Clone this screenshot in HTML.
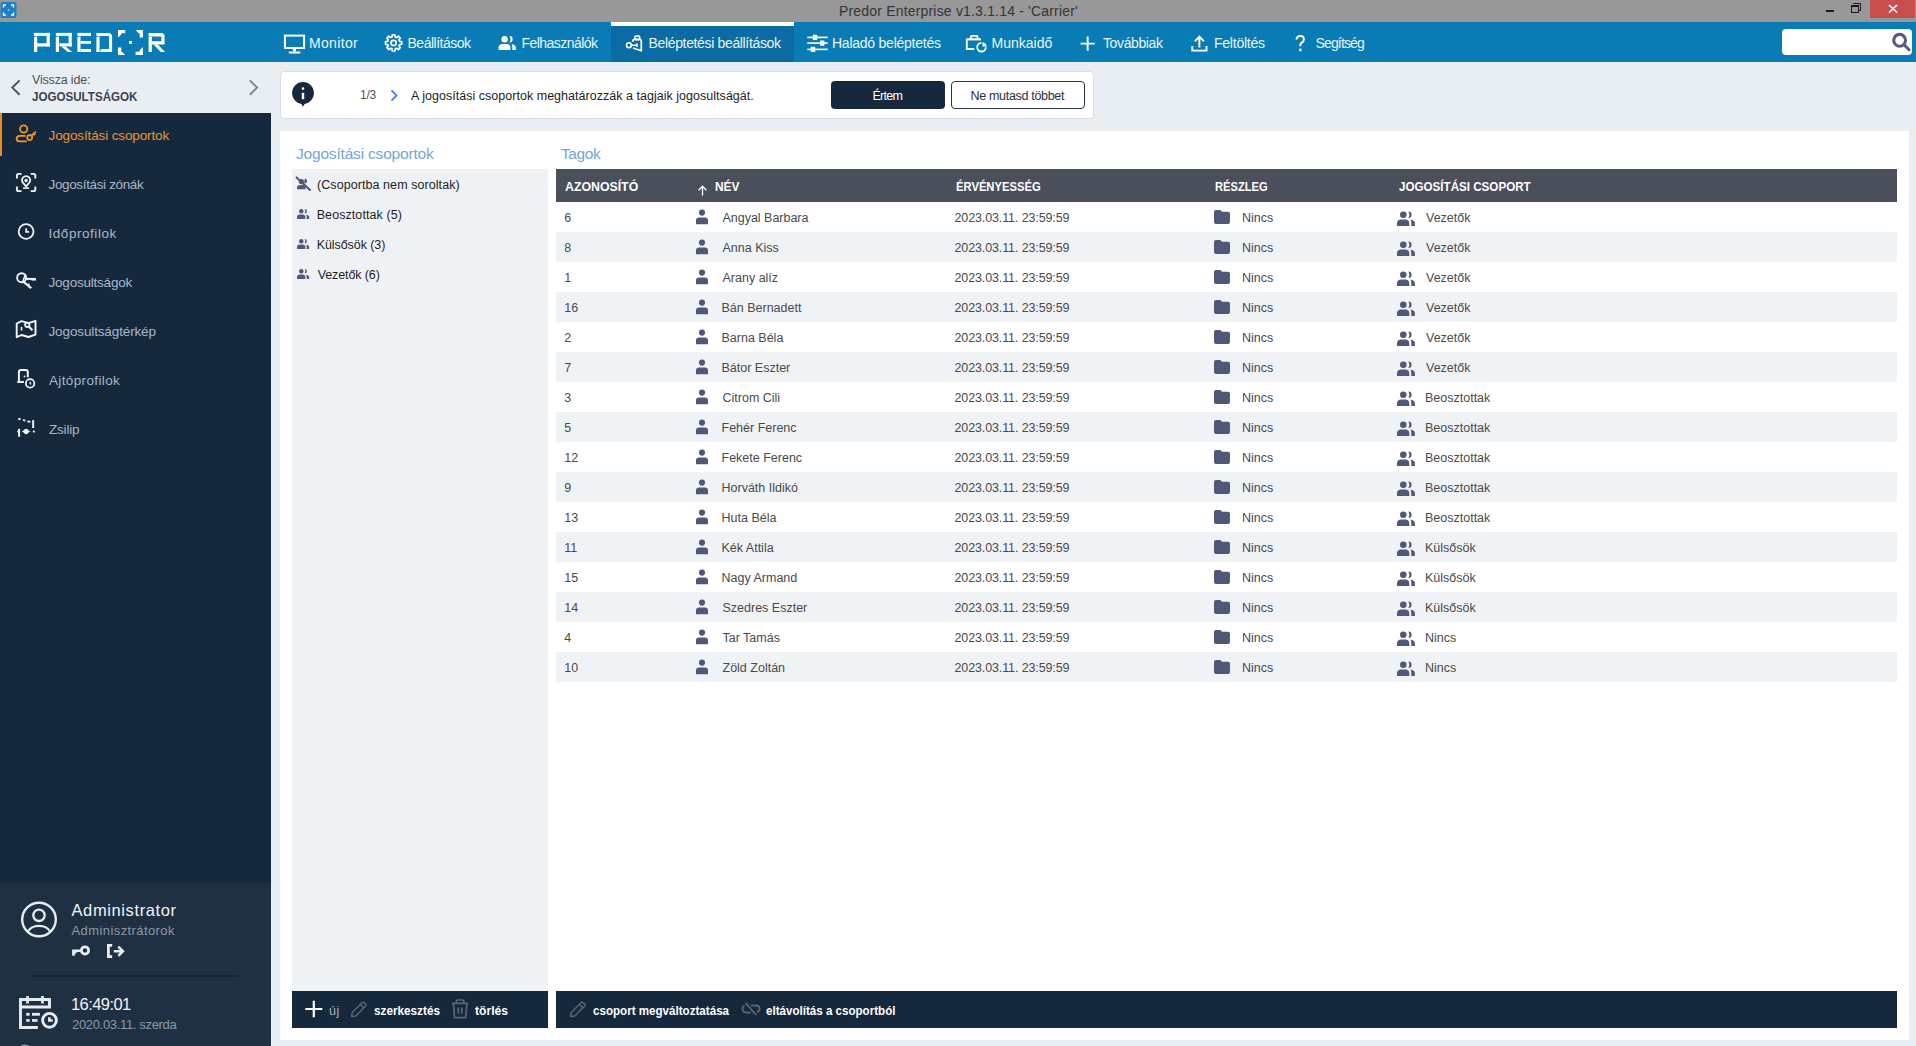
<!DOCTYPE html>
<html><head><meta charset="utf-8"><style>
html,body{margin:0;padding:0;width:1916px;height:1046px;overflow:hidden;background:#e8eef2;font-family:'Liberation Sans', sans-serif;}
div,svg{box-sizing:border-box}
</style></head><body>
<div style="position:absolute;left:0px;top:0px;width:1916px;height:22px;background:#989898;"></div><div style="position:absolute;left:0px;top:22px;width:1916px;height:40px;background:#0a7cb5;"></div><div style="position:absolute;left:0px;top:62px;width:1916px;height:984px;background:#e8eef2;"></div><div style="position:absolute;left:0px;top:113px;width:271px;height:933px;background:#16283b;"></div><div style="position:absolute;left:0px;top:883px;width:271px;height:163px;background:#1f3043;"></div><div style="position:absolute;left:0px;top:113px;width:2px;height:43px;background:#ea8c20;"></div><div style="position:absolute;left:611px;top:22px;width:183px;height:40px;background:#0a6ca2;"></div><div style="position:absolute;left:611px;top:22px;width:183px;height:4px;background:#ffffff;"></div><div style="position:absolute;left:1782px;top:29px;width:130px;height:26px;background:#ffffff;border-radius:4px"></div><div style="position:absolute;left:280px;top:71px;width:814px;height:48px;background:#ffffff;border:1px solid #d8dee3;border-radius:4px;box-sizing:border-box"></div><div style="position:absolute;left:831px;top:81px;width:114px;height:28px;background:#16283b;border-radius:4px"></div><div style="position:absolute;left:951px;top:81px;width:134px;height:28px;background:#ffffff;border:1px solid #2b3442;border-radius:4px;box-sizing:border-box"></div><div style="position:absolute;left:280px;top:131px;width:1629px;height:909px;background:#ffffff;"></div><div style="position:absolute;left:292px;top:169px;width:256px;height:822px;background:#eef2f5;"></div><div style="position:absolute;left:556px;top:169px;width:1341px;height:33px;background:#4b4f5c;"></div><div style="position:absolute;left:556px;top:232px;width:1341px;height:30px;background:#f0f3f6;"></div><div style="position:absolute;left:556px;top:292px;width:1341px;height:30px;background:#f0f3f6;"></div><div style="position:absolute;left:556px;top:352px;width:1341px;height:30px;background:#f0f3f6;"></div><div style="position:absolute;left:556px;top:412px;width:1341px;height:30px;background:#f0f3f6;"></div><div style="position:absolute;left:556px;top:472px;width:1341px;height:30px;background:#f0f3f6;"></div><div style="position:absolute;left:556px;top:532px;width:1341px;height:30px;background:#f0f3f6;"></div><div style="position:absolute;left:556px;top:592px;width:1341px;height:30px;background:#f0f3f6;"></div><div style="position:absolute;left:556px;top:652px;width:1341px;height:30px;background:#f0f3f6;"></div><div style="position:absolute;left:292px;top:991px;width:256px;height:37px;background:#16283b;"></div><div style="position:absolute;left:556px;top:991px;width:1341px;height:37px;background:#16283b;"></div><div style="position:absolute;left:30px;top:975px;width:209px;height:2px;background:#17232f;"></div>
<svg style="position:absolute;left:0;top:0" width="1916" height="1046" viewBox="0 0 1916 1046"><rect x="0.5" y="2" width="16" height="16" rx="2" fill="#1b80c4"/><path d="M3.5 7.5V5h2.5 M11 5h2.5v2.5 M13.5 12.5V15H11 M6 15H3.5v-2.5" stroke="#fff" stroke-width="1.4" fill="none"/><rect x="7.7" y="9.2" width="1.6" height="1.6" fill="#9fd0f0"/><rect x="1826" y="10" width="8" height="2" fill="#1a1a1a"/><path d="M1853.5 4V3.5h7v7h-1.5" stroke="#1a1a1a" stroke-width="1" fill="none"/><rect x="1851.5" y="5.5" width="7" height="7" stroke="#1a1a1a" stroke-width="1" fill="none"/><rect x="1851" y="5" width="8" height="2" fill="#1a1a1a"/><rect x="1870" y="0" width="45" height="18" fill="#c94f4f"/><path d="M1889 5L1897 12.5M1897 5L1889 12.5" stroke="#fff" stroke-width="1.6"/><rect x="34" y="32.9" width="15.7" height="3.0" fill="#fff"/><rect x="46.6" y="32.9" width="3.1" height="13.5" fill="#fff"/><path d="M37.2 43.3 L49.7 43.3 L49.7 46.4 L38.2 46.4 L37.2 47.4Z" fill="#fff"/><path d="M34 37.6 L35.2 36.4 L37.2 36.4 L37.2 52 L34 52Z" fill="#fff"/><rect x="55.8" y="32.9" width="15.9" height="3.0" fill="#fff"/><rect x="68.6" y="32.9" width="3.1" height="13.5" fill="#fff"/><rect x="59.4" y="43.3" width="12.3" height="3.1" fill="#fff"/><path d="M55.8 37.6 L57 36.4 L59 36.4 L59 52 L55.8 52Z" fill="#fff"/><path d="M61.2 46.4 L65.4 46.4 L72.2 52 L67.9 52Z" fill="#fff"/><rect x="77.4" y="32.9" width="13.6" height="3.0" fill="#fff"/><path d="M77.4 37.6 L78.6 36.4 L80.5 36.4 L80.5 52 L77.4 52Z" fill="#fff"/><path d="M81.2 41 L91 41 L91 43.7 L80.5 43.7 L80.5 41.7Z" fill="#fff"/><rect x="80.5" y="49" width="10.5" height="3.0" fill="#fff"/><path d="M96.4 32.9 L109.8 32.9 L112.1 35.2 L112.1 52 L100.3 52 L100.3 50.2 L101.5 49 L109 49 L109 36.6 L108.3 35.9 L96.4 35.9Z" fill="#fff"/><path d="M96.4 37.6 L97.6 36.4 L99.6 36.4 L99.6 52 L96.4 52Z" fill="#fff"/><path d="M118 30.1 L125.2 30.1 L125.2 33.3 L121.2 33.3 L121.2 34.4 L118 37.6Z" fill="#fff"/><path d="M135.6 30.1 L142.9 30.1 L142.9 37.6 L139.7 37.6 L139.7 33.3 L138.8 33.3Z" fill="#fff"/><path d="M118 47.6 L121.2 47.6 L121.2 51.7 L122 51.7 L125.2 54.9 L118 54.9Z" fill="#fff"/><path d="M142.9 47.1 L142.9 54.9 L135.6 54.9 L135.6 51.7 L139.7 51.7 L139.7 50.3Z" fill="#fff"/><rect x="129" y="41" width="3.1" height="2.8" fill="#fff"/><path d="M148.6 33 L162.6 33 L164.6 35 L164.6 44.4 L151.9 44.4 L151.9 41.3 L161.4 41.3 L161.4 36.4 L148.6 36.4Z" fill="#fff"/><path d="M148.6 37.4 L149.6 36.4 L151.9 36.4 L151.9 52 L148.6 52Z" fill="#fff"/><path d="M153.6 44.4 L157.8 44.4 L165 52 L160.8 52Z" fill="#fff"/><rect x="284.9" y="35.6" width="19.2" height="12.4" stroke="#fff" stroke-width="2" fill="none"/><rect x="293" y="48" width="3" height="3.5" fill="#fff"/><rect x="288.7" y="51.5" width="11.7" height="2" rx="0.8" fill="#fff"/><path d="M399.59 41.31 L401.68 41.51 L401.68 44.29 L399.59 44.49 L398.96 46.01 L400.30 47.63 L398.33 49.60 L396.71 48.26 L395.19 48.89 L394.99 50.98 L392.21 50.98 L392.01 48.89 L390.49 48.26 L388.87 49.60 L386.90 47.63 L388.24 46.01 L387.61 44.49 L385.52 44.29 L385.52 41.51 L387.61 41.31 L388.24 39.79 L386.90 38.17 L388.87 36.20 L390.49 37.54 L392.01 36.91 L392.21 34.82 L394.99 34.82 L395.19 36.91 L396.71 37.54 L398.33 36.20 L400.30 38.17 L398.96 39.79Z" stroke="#fff" stroke-width="1.7" fill="none" stroke-linejoin="round"/><circle cx="393.6" cy="42.9" r="2.6" stroke="#fff" stroke-width="1.7" fill="none"/><g transform="translate(498.6,36.1) scale(0.96)" fill="#fff"><circle cx="6.3" cy="3.3" r="3.3"/><path d="M11.3 0A3.3 3.3 0 0 1 11.3 6.6A6 6 0 0 0 11.3 0Z"/><path d="M0 14.6V11.5C0 9.6 1.8 8.2 4 8.2H8.3C10.5 8.2 12.3 9.6 12.3 11.5V14.6Z"/><path d="M13.4 8.4C16 8.6 17.9 9.8 17.9 11.6V14.6H14.3V11.8C14.3 10.5 14.2 9.4 13.4 8.4Z"/></g><path d="M632.6 41.8C632.6 40 633.6 39.4 635 39.4H640.6L641.3 41.3V50.8L633 48" stroke="#fff" stroke-width="1.7" fill="none" stroke-linejoin="round"/><rect x="635" y="36" width="4.6" height="3.6" rx="0.8" stroke="#fff" stroke-width="1.6" fill="none"/><circle cx="628.9" cy="45.2" r="2.4" stroke="#fff" stroke-width="1.6" fill="none"/><path d="M631.3 45.2H637M637 43.4V47" stroke="#fff" stroke-width="1.6" fill="none"/><rect x="807.3" y="36.6" width="20.4" height="1.6" fill="#fff"/><rect x="812.8" y="34.8" width="4.4" height="5.2" rx="0.6" fill="#fff"/><rect x="807.3" y="42.300000000000004" width="20.4" height="1.6" fill="#fff"/><rect x="820.0" y="40.5" width="4.4" height="5.2" rx="0.6" fill="#fff"/><rect x="807.3" y="48.6" width="20.4" height="1.6" fill="#fff"/><rect x="810.8" y="46.8" width="4.4" height="5.2" rx="0.6" fill="#fff"/><path d="M980.8 39.3V39.3H966.8V49H974.2" stroke="#fff" stroke-width="1.8" fill="none" stroke-linejoin="round"/><path d="M966.8 39.3H980.8" stroke="#fff" stroke-width="1.8"/><path d="M970.8 39.3V36.6Q970.8 35.8 971.6 35.8H976.8Q977.6 35.8 977.6 36.6V39.3" stroke="#fff" stroke-width="1.7" fill="none"/><path d="M981.5 42.9A4.3 4.3 0 1 0 985.8 47.2" stroke="#fff" stroke-width="1.8" fill="none"/><path d="M982.5 42.3A4.6 4.6 0 0 1 986.6 46.4H982.5Z" fill="#fff"/><path d="M1080.6 43.6H1094.7M1087.65 36.6V50.7" stroke="#fff" stroke-width="1.9"/><path d="M1192.3 46V50.6H1206.5V46" stroke="#fff" stroke-width="1.9" fill="none"/><path d="M1199.4 47.5V37M1194.8 41.3L1199.4 36.6L1204 41.3" stroke="#fff" stroke-width="1.9" fill="none"/><path d="M1296.6 39.6C1296.6 37.4 1298 36 1300.2 36C1302.5 36 1303.9 37.4 1303.9 39.4C1303.9 41.4 1302.6 42.1 1301.4 42.9C1300.6 43.5 1300.3 44.1 1300.3 45.4V46.2" stroke="#fff" stroke-width="2" fill="none"/><rect x="1299.1" y="48.6" width="2.4" height="2.6" rx="0.4" fill="#fff"/><circle cx="1899.6" cy="40.3" r="5.9" stroke="#535c7b" stroke-width="3.1" fill="none"/><path d="M1904.2 44.9L1909 49.7" stroke="#535c7b" stroke-width="3" stroke-linecap="round"/><path d="M19.6 80.4L12.3 87.6L19.6 94.8" stroke="#4a505c" stroke-width="1.9" fill="none"/><path d="M249.8 80.4L257.1 87.6L249.8 94.8" stroke="#7d838c" stroke-width="1.9" fill="none"/><circle cx="23.7" cy="129" r="3.6" stroke="#e9982b" stroke-width="1.8" fill="none"/><path d="M26.8 141.3H19.6Q16.6 141.3 16.6 138.7Q16.6 135.9 20.2 135.9H25.6" stroke="#e9982b" stroke-width="1.8" fill="none"/><circle cx="29.7" cy="137.6" r="2.5" stroke="#e9982b" stroke-width="1.7" fill="none"/><path d="M31.5 135.8L35.8 131.6M33.6 133.8L35 135.2" stroke="#e9982b" stroke-width="1.9" fill="none"/><path d="M16.9 178.5V175.5Q16.9 173.9 18.5 173.9H21.5 M30.7 173.9H33.7Q35.3 173.9 35.3 175.5V178.5 M35.3 186.5V189.5Q35.3 191.1 33.7 191.1H30.7 M21.5 191.1H18.5Q16.9 191.1 16.9 189.5V186.5" stroke="#f2f5f8" stroke-width="1.9" fill="none"/><path d="M26.1 186.3L23.3 183.2A4.1 4.1 0 1 1 28.9 183.2Z" stroke="#f2f5f8" stroke-width="1.8" fill="none" stroke-linejoin="round"/><circle cx="26.1" cy="180.5" r="1.7" fill="#f2f5f8"/><rect x="23.1" y="187.3" width="6" height="1.6" fill="#f2f5f8"/><circle cx="26.1" cy="231.5" r="7.4" stroke="#f2f5f8" stroke-width="1.8" fill="none"/><path d="M26.2 228.2V231.8H29" stroke="#f2f5f8" stroke-width="1.8" fill="none"/><circle cx="21.65" cy="277.7" r="4.5" stroke="#f2f5f8" stroke-width="1.9" fill="none"/><path d="M25.3 274.6L22.9 281.4" stroke="#f2f5f8" stroke-width="1.6" fill="none"/><path d="M25.6 278.9H35.8" stroke="#f2f5f8" stroke-width="2" fill="none"/><rect x="31.6" y="278.9" width="4.2" height="1.7" fill="#f2f5f8"/><path d="M23.6 281.9L31.2 288.1" stroke="#f2f5f8" stroke-width="2.3" fill="none"/><path d="M28 285.5L29.3 283.9" stroke="#f2f5f8" stroke-width="1.7" fill="none"/><path d="M16.7 323.5L21.5 321.2L28.5 323.2L35.5 320.8V334.6L28.5 337L21.5 335L16.7 337.2Z" stroke="#f2f5f8" stroke-width="1.9" fill="none" stroke-linejoin="round"/><path d="M21.5 327V330.5" stroke="#f2f5f8" stroke-width="1.6"/><circle cx="27.3" cy="324.8" r="2.2" stroke="#f2f5f8" stroke-width="1.8" fill="none"/><path d="M28.8 326.5L32.4 330.2" stroke="#f2f5f8" stroke-width="2.2"/><path d="M18.9 382V372Q18.9 369.9 21 369.9H25.7Q27.8 369.9 27.8 372V377.3 M17.3 382.1H23.9" stroke="#f2f5f8" stroke-width="2" fill="none"/><circle cx="24.5" cy="376.4" r="0.9" fill="#f2f5f8"/><circle cx="30.1" cy="383.4" r="4.2" stroke="#f2f5f8" stroke-width="1.8" fill="none"/><path d="M30.1 381.8V383.5L31.3 384.3" stroke="#f2f5f8" stroke-width="1.2" fill="none"/><rect x="18.3" y="418.1" width="2.2" height="1.9" rx="0.5" fill="#f2f5f8"/><path d="M22.9 420L25.3 420.6M27.4 421.3L30.4 421.9" stroke="#f2f5f8" stroke-width="1.8"/><rect x="32.2" y="420.1" width="1.95" height="7.9" fill="#f2f5f8"/><rect x="32.8" y="430.7" width="2.1" height="1.7" fill="#f2f5f8"/><rect x="18.1" y="428.8" width="2" height="8" fill="#f2f5f8"/><path d="M16.9 431.5L18.3 430.1V432.9Z" fill="#f2f5f8"/><path d="M21.7 431.5Q23.6 431 24.2 429.7Q25 428.8 26.1 428.8Q27.2 428.8 28 429.7Q28.6 431 30.5 431.5Q28.6 432 28 433.3Q27.2 434.2 26.1 434.2Q25 434.2 24.2 433.3Q23.6 432 21.7 431.5Z" fill="#f2f5f8"/><circle cx="303" cy="93" r="10.9" fill="#16283b"/><path d="M300.8 103L303 106.8L305.2 103Z" fill="#16283b"/><circle cx="303" cy="88.6" r="1.3" fill="#fff"/><rect x="301.8" y="92.8" width="2.4" height="6.4" fill="#fff"/><path d="M391.5 90.3L396.5 95.5L391.5 100.7" stroke="#3b7dd8" stroke-width="1.7" fill="none"/><circle cx="301.4" cy="181.6" r="2.6" fill="#505a78"/><path d="M305 178.4A2.6 2.6 0 0 1 305.4 183.4L304 182.2Z" fill="#505a78"/><path d="M297 189.3V187.6Q297 185 299.8 185H303Q305.6 185 305.6 187.6V189.3Z" fill="#505a78"/><path d="M296.6 177.4L310 190" stroke="#505a78" stroke-width="2.1" stroke-linecap="round"/><g transform="translate(297,209) scale(0.68)" fill="#505a78"><circle cx="6.3" cy="3.3" r="3.3"/><path d="M11.3 0A3.3 3.3 0 0 1 11.3 6.6A6 6 0 0 0 11.3 0Z"/><path d="M0 14.6V11.5C0 9.6 1.8 8.2 4 8.2H8.3C10.5 8.2 12.3 9.6 12.3 11.5V14.6Z"/><path d="M13.4 8.4C16 8.6 17.9 9.8 17.9 11.6V14.6H14.3V11.8C14.3 10.5 14.2 9.4 13.4 8.4Z"/></g><g transform="translate(297,239) scale(0.68)" fill="#505a78"><circle cx="6.3" cy="3.3" r="3.3"/><path d="M11.3 0A3.3 3.3 0 0 1 11.3 6.6A6 6 0 0 0 11.3 0Z"/><path d="M0 14.6V11.5C0 9.6 1.8 8.2 4 8.2H8.3C10.5 8.2 12.3 9.6 12.3 11.5V14.6Z"/><path d="M13.4 8.4C16 8.6 17.9 9.8 17.9 11.6V14.6H14.3V11.8C14.3 10.5 14.2 9.4 13.4 8.4Z"/></g><g transform="translate(297,269) scale(0.68)" fill="#505a78"><circle cx="6.3" cy="3.3" r="3.3"/><path d="M11.3 0A3.3 3.3 0 0 1 11.3 6.6A6 6 0 0 0 11.3 0Z"/><path d="M0 14.6V11.5C0 9.6 1.8 8.2 4 8.2H8.3C10.5 8.2 12.3 9.6 12.3 11.5V14.6Z"/><path d="M13.4 8.4C16 8.6 17.9 9.8 17.9 11.6V14.6H14.3V11.8C14.3 10.5 14.2 9.4 13.4 8.4Z"/></g><circle cx="702" cy="212.6" r="3.1" fill="#4f5879"/><path d="M696 224.2V220.5Q696 217.5 699 217.5H705Q708 217.5 708 220.5V224.2Z" fill="#4f5879"/><path d="M1214 212Q1214 210 1216 210H1220.3L1222 211.8H1228Q1230 211.8 1230 213.8V222Q1230 224 1228 224H1216Q1214 224 1214 222Z" fill="#4f5879"/><g transform="translate(1397,211.4) scale(1.0)" fill="#4f5879"><circle cx="6.3" cy="3.3" r="3.3"/><path d="M11.3 0A3.3 3.3 0 0 1 11.3 6.6A6 6 0 0 0 11.3 0Z"/><path d="M0 14.6V11.5C0 9.6 1.8 8.2 4 8.2H8.3C10.5 8.2 12.3 9.6 12.3 11.5V14.6Z"/><path d="M13.4 8.4C16 8.6 17.9 9.8 17.9 11.6V14.6H14.3V11.8C14.3 10.5 14.2 9.4 13.4 8.4Z"/></g><circle cx="702" cy="242.6" r="3.1" fill="#4f5879"/><path d="M696 254.2V250.5Q696 247.5 699 247.5H705Q708 247.5 708 250.5V254.2Z" fill="#4f5879"/><path d="M1214 242Q1214 240 1216 240H1220.3L1222 241.8H1228Q1230 241.8 1230 243.8V252Q1230 254 1228 254H1216Q1214 254 1214 252Z" fill="#4f5879"/><g transform="translate(1397,241.4) scale(1.0)" fill="#4f5879"><circle cx="6.3" cy="3.3" r="3.3"/><path d="M11.3 0A3.3 3.3 0 0 1 11.3 6.6A6 6 0 0 0 11.3 0Z"/><path d="M0 14.6V11.5C0 9.6 1.8 8.2 4 8.2H8.3C10.5 8.2 12.3 9.6 12.3 11.5V14.6Z"/><path d="M13.4 8.4C16 8.6 17.9 9.8 17.9 11.6V14.6H14.3V11.8C14.3 10.5 14.2 9.4 13.4 8.4Z"/></g><circle cx="702" cy="272.6" r="3.1" fill="#4f5879"/><path d="M696 284.2V280.5Q696 277.5 699 277.5H705Q708 277.5 708 280.5V284.2Z" fill="#4f5879"/><path d="M1214 272Q1214 270 1216 270H1220.3L1222 271.8H1228Q1230 271.8 1230 273.8V282Q1230 284 1228 284H1216Q1214 284 1214 282Z" fill="#4f5879"/><g transform="translate(1397,271.4) scale(1.0)" fill="#4f5879"><circle cx="6.3" cy="3.3" r="3.3"/><path d="M11.3 0A3.3 3.3 0 0 1 11.3 6.6A6 6 0 0 0 11.3 0Z"/><path d="M0 14.6V11.5C0 9.6 1.8 8.2 4 8.2H8.3C10.5 8.2 12.3 9.6 12.3 11.5V14.6Z"/><path d="M13.4 8.4C16 8.6 17.9 9.8 17.9 11.6V14.6H14.3V11.8C14.3 10.5 14.2 9.4 13.4 8.4Z"/></g><circle cx="702" cy="302.6" r="3.1" fill="#4f5879"/><path d="M696 314.2V310.5Q696 307.5 699 307.5H705Q708 307.5 708 310.5V314.2Z" fill="#4f5879"/><path d="M1214 302Q1214 300 1216 300H1220.3L1222 301.8H1228Q1230 301.8 1230 303.8V312Q1230 314 1228 314H1216Q1214 314 1214 312Z" fill="#4f5879"/><g transform="translate(1397,301.4) scale(1.0)" fill="#4f5879"><circle cx="6.3" cy="3.3" r="3.3"/><path d="M11.3 0A3.3 3.3 0 0 1 11.3 6.6A6 6 0 0 0 11.3 0Z"/><path d="M0 14.6V11.5C0 9.6 1.8 8.2 4 8.2H8.3C10.5 8.2 12.3 9.6 12.3 11.5V14.6Z"/><path d="M13.4 8.4C16 8.6 17.9 9.8 17.9 11.6V14.6H14.3V11.8C14.3 10.5 14.2 9.4 13.4 8.4Z"/></g><circle cx="702" cy="332.6" r="3.1" fill="#4f5879"/><path d="M696 344.2V340.5Q696 337.5 699 337.5H705Q708 337.5 708 340.5V344.2Z" fill="#4f5879"/><path d="M1214 332Q1214 330 1216 330H1220.3L1222 331.8H1228Q1230 331.8 1230 333.8V342Q1230 344 1228 344H1216Q1214 344 1214 342Z" fill="#4f5879"/><g transform="translate(1397,331.4) scale(1.0)" fill="#4f5879"><circle cx="6.3" cy="3.3" r="3.3"/><path d="M11.3 0A3.3 3.3 0 0 1 11.3 6.6A6 6 0 0 0 11.3 0Z"/><path d="M0 14.6V11.5C0 9.6 1.8 8.2 4 8.2H8.3C10.5 8.2 12.3 9.6 12.3 11.5V14.6Z"/><path d="M13.4 8.4C16 8.6 17.9 9.8 17.9 11.6V14.6H14.3V11.8C14.3 10.5 14.2 9.4 13.4 8.4Z"/></g><circle cx="702" cy="362.6" r="3.1" fill="#4f5879"/><path d="M696 374.2V370.5Q696 367.5 699 367.5H705Q708 367.5 708 370.5V374.2Z" fill="#4f5879"/><path d="M1214 362Q1214 360 1216 360H1220.3L1222 361.8H1228Q1230 361.8 1230 363.8V372Q1230 374 1228 374H1216Q1214 374 1214 372Z" fill="#4f5879"/><g transform="translate(1397,361.4) scale(1.0)" fill="#4f5879"><circle cx="6.3" cy="3.3" r="3.3"/><path d="M11.3 0A3.3 3.3 0 0 1 11.3 6.6A6 6 0 0 0 11.3 0Z"/><path d="M0 14.6V11.5C0 9.6 1.8 8.2 4 8.2H8.3C10.5 8.2 12.3 9.6 12.3 11.5V14.6Z"/><path d="M13.4 8.4C16 8.6 17.9 9.8 17.9 11.6V14.6H14.3V11.8C14.3 10.5 14.2 9.4 13.4 8.4Z"/></g><circle cx="702" cy="392.6" r="3.1" fill="#4f5879"/><path d="M696 404.2V400.5Q696 397.5 699 397.5H705Q708 397.5 708 400.5V404.2Z" fill="#4f5879"/><path d="M1214 392Q1214 390 1216 390H1220.3L1222 391.8H1228Q1230 391.8 1230 393.8V402Q1230 404 1228 404H1216Q1214 404 1214 402Z" fill="#4f5879"/><g transform="translate(1397,391.4) scale(1.0)" fill="#4f5879"><circle cx="6.3" cy="3.3" r="3.3"/><path d="M11.3 0A3.3 3.3 0 0 1 11.3 6.6A6 6 0 0 0 11.3 0Z"/><path d="M0 14.6V11.5C0 9.6 1.8 8.2 4 8.2H8.3C10.5 8.2 12.3 9.6 12.3 11.5V14.6Z"/><path d="M13.4 8.4C16 8.6 17.9 9.8 17.9 11.6V14.6H14.3V11.8C14.3 10.5 14.2 9.4 13.4 8.4Z"/></g><circle cx="702" cy="422.6" r="3.1" fill="#4f5879"/><path d="M696 434.2V430.5Q696 427.5 699 427.5H705Q708 427.5 708 430.5V434.2Z" fill="#4f5879"/><path d="M1214 422Q1214 420 1216 420H1220.3L1222 421.8H1228Q1230 421.8 1230 423.8V432Q1230 434 1228 434H1216Q1214 434 1214 432Z" fill="#4f5879"/><g transform="translate(1397,421.4) scale(1.0)" fill="#4f5879"><circle cx="6.3" cy="3.3" r="3.3"/><path d="M11.3 0A3.3 3.3 0 0 1 11.3 6.6A6 6 0 0 0 11.3 0Z"/><path d="M0 14.6V11.5C0 9.6 1.8 8.2 4 8.2H8.3C10.5 8.2 12.3 9.6 12.3 11.5V14.6Z"/><path d="M13.4 8.4C16 8.6 17.9 9.8 17.9 11.6V14.6H14.3V11.8C14.3 10.5 14.2 9.4 13.4 8.4Z"/></g><circle cx="702" cy="452.6" r="3.1" fill="#4f5879"/><path d="M696 464.2V460.5Q696 457.5 699 457.5H705Q708 457.5 708 460.5V464.2Z" fill="#4f5879"/><path d="M1214 452Q1214 450 1216 450H1220.3L1222 451.8H1228Q1230 451.8 1230 453.8V462Q1230 464 1228 464H1216Q1214 464 1214 462Z" fill="#4f5879"/><g transform="translate(1397,451.4) scale(1.0)" fill="#4f5879"><circle cx="6.3" cy="3.3" r="3.3"/><path d="M11.3 0A3.3 3.3 0 0 1 11.3 6.6A6 6 0 0 0 11.3 0Z"/><path d="M0 14.6V11.5C0 9.6 1.8 8.2 4 8.2H8.3C10.5 8.2 12.3 9.6 12.3 11.5V14.6Z"/><path d="M13.4 8.4C16 8.6 17.9 9.8 17.9 11.6V14.6H14.3V11.8C14.3 10.5 14.2 9.4 13.4 8.4Z"/></g><circle cx="702" cy="482.6" r="3.1" fill="#4f5879"/><path d="M696 494.2V490.5Q696 487.5 699 487.5H705Q708 487.5 708 490.5V494.2Z" fill="#4f5879"/><path d="M1214 482Q1214 480 1216 480H1220.3L1222 481.8H1228Q1230 481.8 1230 483.8V492Q1230 494 1228 494H1216Q1214 494 1214 492Z" fill="#4f5879"/><g transform="translate(1397,481.4) scale(1.0)" fill="#4f5879"><circle cx="6.3" cy="3.3" r="3.3"/><path d="M11.3 0A3.3 3.3 0 0 1 11.3 6.6A6 6 0 0 0 11.3 0Z"/><path d="M0 14.6V11.5C0 9.6 1.8 8.2 4 8.2H8.3C10.5 8.2 12.3 9.6 12.3 11.5V14.6Z"/><path d="M13.4 8.4C16 8.6 17.9 9.8 17.9 11.6V14.6H14.3V11.8C14.3 10.5 14.2 9.4 13.4 8.4Z"/></g><circle cx="702" cy="512.6" r="3.1" fill="#4f5879"/><path d="M696 524.2V520.5Q696 517.5 699 517.5H705Q708 517.5 708 520.5V524.2Z" fill="#4f5879"/><path d="M1214 512Q1214 510 1216 510H1220.3L1222 511.8H1228Q1230 511.8 1230 513.8V522Q1230 524 1228 524H1216Q1214 524 1214 522Z" fill="#4f5879"/><g transform="translate(1397,511.4) scale(1.0)" fill="#4f5879"><circle cx="6.3" cy="3.3" r="3.3"/><path d="M11.3 0A3.3 3.3 0 0 1 11.3 6.6A6 6 0 0 0 11.3 0Z"/><path d="M0 14.6V11.5C0 9.6 1.8 8.2 4 8.2H8.3C10.5 8.2 12.3 9.6 12.3 11.5V14.6Z"/><path d="M13.4 8.4C16 8.6 17.9 9.8 17.9 11.6V14.6H14.3V11.8C14.3 10.5 14.2 9.4 13.4 8.4Z"/></g><circle cx="702" cy="542.6" r="3.1" fill="#4f5879"/><path d="M696 554.2V550.5Q696 547.5 699 547.5H705Q708 547.5 708 550.5V554.2Z" fill="#4f5879"/><path d="M1214 542Q1214 540 1216 540H1220.3L1222 541.8H1228Q1230 541.8 1230 543.8V552Q1230 554 1228 554H1216Q1214 554 1214 552Z" fill="#4f5879"/><g transform="translate(1397,541.4) scale(1.0)" fill="#4f5879"><circle cx="6.3" cy="3.3" r="3.3"/><path d="M11.3 0A3.3 3.3 0 0 1 11.3 6.6A6 6 0 0 0 11.3 0Z"/><path d="M0 14.6V11.5C0 9.6 1.8 8.2 4 8.2H8.3C10.5 8.2 12.3 9.6 12.3 11.5V14.6Z"/><path d="M13.4 8.4C16 8.6 17.9 9.8 17.9 11.6V14.6H14.3V11.8C14.3 10.5 14.2 9.4 13.4 8.4Z"/></g><circle cx="702" cy="572.6" r="3.1" fill="#4f5879"/><path d="M696 584.2V580.5Q696 577.5 699 577.5H705Q708 577.5 708 580.5V584.2Z" fill="#4f5879"/><path d="M1214 572Q1214 570 1216 570H1220.3L1222 571.8H1228Q1230 571.8 1230 573.8V582Q1230 584 1228 584H1216Q1214 584 1214 582Z" fill="#4f5879"/><g transform="translate(1397,571.4) scale(1.0)" fill="#4f5879"><circle cx="6.3" cy="3.3" r="3.3"/><path d="M11.3 0A3.3 3.3 0 0 1 11.3 6.6A6 6 0 0 0 11.3 0Z"/><path d="M0 14.6V11.5C0 9.6 1.8 8.2 4 8.2H8.3C10.5 8.2 12.3 9.6 12.3 11.5V14.6Z"/><path d="M13.4 8.4C16 8.6 17.9 9.8 17.9 11.6V14.6H14.3V11.8C14.3 10.5 14.2 9.4 13.4 8.4Z"/></g><circle cx="702" cy="602.6" r="3.1" fill="#4f5879"/><path d="M696 614.2V610.5Q696 607.5 699 607.5H705Q708 607.5 708 610.5V614.2Z" fill="#4f5879"/><path d="M1214 602Q1214 600 1216 600H1220.3L1222 601.8H1228Q1230 601.8 1230 603.8V612Q1230 614 1228 614H1216Q1214 614 1214 612Z" fill="#4f5879"/><g transform="translate(1397,601.4) scale(1.0)" fill="#4f5879"><circle cx="6.3" cy="3.3" r="3.3"/><path d="M11.3 0A3.3 3.3 0 0 1 11.3 6.6A6 6 0 0 0 11.3 0Z"/><path d="M0 14.6V11.5C0 9.6 1.8 8.2 4 8.2H8.3C10.5 8.2 12.3 9.6 12.3 11.5V14.6Z"/><path d="M13.4 8.4C16 8.6 17.9 9.8 17.9 11.6V14.6H14.3V11.8C14.3 10.5 14.2 9.4 13.4 8.4Z"/></g><circle cx="702" cy="632.6" r="3.1" fill="#4f5879"/><path d="M696 644.2V640.5Q696 637.5 699 637.5H705Q708 637.5 708 640.5V644.2Z" fill="#4f5879"/><path d="M1214 632Q1214 630 1216 630H1220.3L1222 631.8H1228Q1230 631.8 1230 633.8V642Q1230 644 1228 644H1216Q1214 644 1214 642Z" fill="#4f5879"/><g transform="translate(1397,631.4) scale(1.0)" fill="#4f5879"><circle cx="6.3" cy="3.3" r="3.3"/><path d="M11.3 0A3.3 3.3 0 0 1 11.3 6.6A6 6 0 0 0 11.3 0Z"/><path d="M0 14.6V11.5C0 9.6 1.8 8.2 4 8.2H8.3C10.5 8.2 12.3 9.6 12.3 11.5V14.6Z"/><path d="M13.4 8.4C16 8.6 17.9 9.8 17.9 11.6V14.6H14.3V11.8C14.3 10.5 14.2 9.4 13.4 8.4Z"/></g><circle cx="702" cy="662.6" r="3.1" fill="#4f5879"/><path d="M696 674.2V670.5Q696 667.5 699 667.5H705Q708 667.5 708 670.5V674.2Z" fill="#4f5879"/><path d="M1214 662Q1214 660 1216 660H1220.3L1222 661.8H1228Q1230 661.8 1230 663.8V672Q1230 674 1228 674H1216Q1214 674 1214 672Z" fill="#4f5879"/><g transform="translate(1397,661.4) scale(1.0)" fill="#4f5879"><circle cx="6.3" cy="3.3" r="3.3"/><path d="M11.3 0A3.3 3.3 0 0 1 11.3 6.6A6 6 0 0 0 11.3 0Z"/><path d="M0 14.6V11.5C0 9.6 1.8 8.2 4 8.2H8.3C10.5 8.2 12.3 9.6 12.3 11.5V14.6Z"/><path d="M13.4 8.4C16 8.6 17.9 9.8 17.9 11.6V14.6H14.3V11.8C14.3 10.5 14.2 9.4 13.4 8.4Z"/></g><path d="M702.5 195.6V186.5M698.6 190.3L702.5 186.3L706.4 190.3" stroke="#fff" stroke-width="1.3" fill="none"/><path d="M305.3 1009H322.3M313.8 1000.7V1017.2" stroke="#fff" stroke-width="2.2"/><path d="M351.5 1016.5L352.3 1012.5L362.0 1002.8Q363.1 1001.8 364.2 1002.8L365.5 1004.1Q366.5 1005.2 365.5 1006.3L355.8 1016.0Z M360.5 1004.5L363.8 1007.8" stroke="#5a6676" stroke-width="1.5" fill="none" stroke-linejoin="round"/><path d="M570.5 1016.5L571.3 1012.5L581.0 1002.8Q582.1 1001.8 583.2 1002.8L584.5 1004.1Q585.5 1005.2 584.5 1006.3L574.8 1016.0Z M579.5 1004.5L582.8 1007.8" stroke="#5a6676" stroke-width="1.5" fill="none" stroke-linejoin="round"/><path d="M452 1003.3H468.1M456.3 1003.3V1001.3Q456.3 1000 457.6 1000H462.6Q463.9 1000 463.9 1001.3V1003.3 M453.4 1003.3L454.5 1017.7H465.7L466.9 1003.3 M458.4 1007.6V1013.8M461.8 1007.6V1013.8" stroke="#5a6676" stroke-width="1.7" fill="none"/><path d="M745.6 1002.8L756.2 1015 M750.6 1012.5H746.5Q742.6 1012.5 742.6 1008.8Q742.6 1006.3 744.7 1005.3 M751.1 1005.5H755.6Q759.6 1005.5 759.6 1008.8Q759.6 1011.2 757 1012.2" stroke="#5a6676" stroke-width="1.8" fill="none"/><circle cx="39" cy="919.5" r="16.8" stroke="#e6ebf0" stroke-width="2.4" fill="none"/><circle cx="39" cy="915.3" r="5.7" stroke="#e6ebf0" stroke-width="2.3" fill="none"/><path d="M27.6 931.8Q31 925.8 39 925.8Q47 925.8 50.4 931.8" stroke="#e6ebf0" stroke-width="2.3" fill="none"/><circle cx="85" cy="950.4" r="3.6" stroke="#e6ebf0" stroke-width="2.8" fill="none"/><path d="M72.1 949.5H81.5V952H76.5V953.5H74.8V955.8H72.1Z" fill="#e6ebf0"/><path d="M112.2 945.4H108.4V956.6H112.2" stroke="#e6ebf0" stroke-width="2.8" fill="none"/><path d="M113.8 951.2H121.5M118.3 946.6L122.9 951.2L118.3 955.8" stroke="#e6ebf0" stroke-width="2.6" fill="none"/><path d="M37.8 1027.5H20.5V999.5H49.5V1007H20.5" stroke="#e6ebf0" stroke-width="2.9" fill="none"/><rect x="26.2" y="996" width="2.7" height="7.5" fill="#e6ebf0"/><rect x="41.1" y="996" width="2.7" height="7.5" fill="#e6ebf0"/><rect x="26.2" y="1012.9" width="3.4" height="2.8" fill="#e6ebf0"/><rect x="32" y="1012.9" width="7.9" height="2.8" fill="#e6ebf0"/><rect x="26.2" y="1019.1" width="3.4" height="2.7" fill="#e6ebf0"/><rect x="32" y="1019.1" width="5.5" height="2.7" fill="#e6ebf0"/><circle cx="49.5" cy="1020.3" r="6.9" stroke="#e6ebf0" stroke-width="2.9" fill="none"/><path d="M49.3 1017.3V1020.5H52.7" stroke="#e6ebf0" stroke-width="2.6" fill="none"/><ellipse cx="25" cy="1046" rx="4" ry="1.6" fill="#8a98a8"/></svg>
<div id="t0" style="position:absolute;left:839.00px;top:4.20px;font-size:14px;line-height:14px;font-weight:400;color:#353535;letter-spacing:0.182px;white-space:nowrap;">Predor Enterprise v1.3.1.14 - 'Carrier'</div><div id="t1" style="position:absolute;left:309.00px;top:35.90px;font-size:14px;line-height:14px;font-weight:400;color:#e8f4fb;letter-spacing:0.330px;white-space:nowrap;">Monitor</div><div id="t2" style="position:absolute;left:407.50px;top:35.90px;font-size:14px;line-height:14px;font-weight:400;color:#e8f4fb;letter-spacing:-0.498px;white-space:nowrap;">Beállítások</div><div id="t3" style="position:absolute;left:521.50px;top:35.90px;font-size:14px;line-height:14px;font-weight:400;color:#e8f4fb;letter-spacing:-0.544px;white-space:nowrap;">Felhasználók</div><div id="t4" style="position:absolute;left:648.50px;top:35.90px;font-size:14px;line-height:14px;font-weight:400;color:#e8f4fb;letter-spacing:-0.345px;white-space:nowrap;">Beléptetési beállítások</div><div id="t5" style="position:absolute;left:832.00px;top:35.90px;font-size:14px;line-height:14px;font-weight:400;color:#e8f4fb;letter-spacing:-0.241px;white-space:nowrap;">Haladó beléptetés</div><div id="t6" style="position:absolute;left:991.50px;top:35.90px;font-size:14px;line-height:14px;font-weight:400;color:#e8f4fb;letter-spacing:0.012px;white-space:nowrap;">Munkaidő</div><div id="t7" style="position:absolute;left:1103.00px;top:35.90px;font-size:14px;line-height:14px;font-weight:400;color:#e8f4fb;letter-spacing:-0.380px;white-space:nowrap;">Továbbiak</div><div id="t8" style="position:absolute;left:1214.00px;top:35.90px;font-size:14px;line-height:14px;font-weight:400;color:#e8f4fb;letter-spacing:-0.239px;white-space:nowrap;">Feltöltés</div><div id="t9" style="position:absolute;left:1315.50px;top:35.90px;font-size:14px;line-height:14px;font-weight:400;color:#e8f4fb;letter-spacing:-0.854px;white-space:nowrap;">Segítség</div><div id="t10" style="position:absolute;left:32.00px;top:73.88px;font-size:12.5px;line-height:12.5px;font-weight:400;color:#505050;letter-spacing:-0.174px;white-space:nowrap;">Vissza ide:</div><div id="t11" style="position:absolute;left:32.00px;top:89.95px;font-size:13px;line-height:13px;font-weight:700;color:#3c4250;letter-spacing:0.000px;white-space:nowrap;transform:scaleX(0.8921);transform-origin:0 0;">JOGOSULTSÁGOK</div><div id="t12" style="position:absolute;left:48.50px;top:129.33px;font-size:13.5px;line-height:13.5px;font-weight:400;color:#e9982b;letter-spacing:-0.122px;white-space:nowrap;">Jogosítási csoportok</div><div id="t13" style="position:absolute;left:48.50px;top:178.33px;font-size:13.5px;line-height:13.5px;font-weight:400;color:#a9b8c9;letter-spacing:-0.354px;white-space:nowrap;">Jogosítási zónák</div><div id="t14" style="position:absolute;left:48.50px;top:227.33px;font-size:13.5px;line-height:13.5px;font-weight:400;color:#a9b8c9;letter-spacing:0.546px;white-space:nowrap;">Időprofilok</div><div id="t15" style="position:absolute;left:48.50px;top:276.32px;font-size:13.5px;line-height:13.5px;font-weight:400;color:#a9b8c9;letter-spacing:-0.213px;white-space:nowrap;">Jogosultságok</div><div id="t16" style="position:absolute;left:48.50px;top:325.32px;font-size:13.5px;line-height:13.5px;font-weight:400;color:#a9b8c9;letter-spacing:-0.129px;white-space:nowrap;">Jogosultságtérkép</div><div id="t17" style="position:absolute;left:49.00px;top:374.32px;font-size:13.5px;line-height:13.5px;font-weight:400;color:#a9b8c9;letter-spacing:0.361px;white-space:nowrap;">Ajtóprofilok</div><div id="t18" style="position:absolute;left:49.00px;top:423.32px;font-size:13.5px;line-height:13.5px;font-weight:400;color:#a9b8c9;letter-spacing:-0.199px;white-space:nowrap;">Zsilip</div><div id="t19" style="position:absolute;left:360.00px;top:89.00px;font-size:12px;line-height:12px;font-weight:400;color:#555555;letter-spacing:-0.254px;white-space:nowrap;">1/3</div><div id="t20" style="position:absolute;left:411.00px;top:89.67px;font-size:12.5px;line-height:12.5px;font-weight:400;color:#1e1e1e;letter-spacing:0.027px;white-space:nowrap;">A jogosítási csoportok meghatározzák a tagjaik jogosultságát.</div><div id="t21" style="position:absolute;left:872.50px;top:89.97px;font-size:12.5px;line-height:12.5px;font-weight:400;color:#ffffff;letter-spacing:-0.731px;white-space:nowrap;">Értem</div><div id="t22" style="position:absolute;left:970.50px;top:89.97px;font-size:12.5px;line-height:12.5px;font-weight:400;color:#2a3040;letter-spacing:-0.313px;white-space:nowrap;">Ne mutasd többet</div><div id="t23" style="position:absolute;left:296.00px;top:145.82px;font-size:15.5px;line-height:15.5px;font-weight:400;color:#76a3da;letter-spacing:-0.187px;white-space:nowrap;">Jogosítási csoportok</div><div id="t24" style="position:absolute;left:561.00px;top:145.62px;font-size:15.5px;line-height:15.5px;font-weight:400;color:#76a3da;letter-spacing:-0.403px;white-space:nowrap;">Tagok</div><div id="t25" style="position:absolute;left:317.00px;top:178.98px;font-size:12.5px;line-height:12.5px;font-weight:400;color:#1e1e1e;letter-spacing:0.071px;white-space:nowrap;">(Csoportba nem soroltak)</div><div id="t26" style="position:absolute;left:316.70px;top:208.98px;font-size:12.5px;line-height:12.5px;font-weight:400;color:#1e1e1e;letter-spacing:0.078px;white-space:nowrap;">Beosztottak (5)</div><div id="t27" style="position:absolute;left:316.70px;top:238.98px;font-size:12.5px;line-height:12.5px;font-weight:400;color:#1e1e1e;letter-spacing:-0.073px;white-space:nowrap;">Külsősök (3)</div><div id="t28" style="position:absolute;left:317.70px;top:268.98px;font-size:12.5px;line-height:12.5px;font-weight:400;color:#1e1e1e;letter-spacing:-0.106px;white-space:nowrap;">Vezetők (6)</div><div id="t29" style="position:absolute;left:565.00px;top:181.18px;font-size:12.5px;line-height:12.5px;font-weight:700;color:#ffffff;letter-spacing:0.000px;white-space:nowrap;transform:scaleX(0.9855);transform-origin:0 0;">AZONOSÍTÓ</div><div id="t30" style="position:absolute;left:714.50px;top:181.18px;font-size:12.5px;line-height:12.5px;font-weight:700;color:#ffffff;letter-spacing:0.000px;white-space:nowrap;transform:scaleX(0.9482);transform-origin:0 0;">NÉV</div><div id="t31" style="position:absolute;left:955.50px;top:181.18px;font-size:12.5px;line-height:12.5px;font-weight:700;color:#ffffff;letter-spacing:0.000px;white-space:nowrap;transform:scaleX(0.8981);transform-origin:0 0;">ÉRVÉNYESSÉG</div><div id="t32" style="position:absolute;left:1215.00px;top:181.18px;font-size:12.5px;line-height:12.5px;font-weight:700;color:#ffffff;letter-spacing:0.000px;white-space:nowrap;transform:scaleX(0.8918);transform-origin:0 0;">RÉSZLEG</div><div id="t33" style="position:absolute;left:1399.00px;top:181.18px;font-size:12.5px;line-height:12.5px;font-weight:700;color:#ffffff;letter-spacing:0.000px;white-space:nowrap;transform:scaleX(0.9292);transform-origin:0 0;">JOGOSÍTÁSI CSOPORT</div><div id="t34" style="position:absolute;left:564.20px;top:212.18px;font-size:12.5px;line-height:12.5px;font-weight:400;color:#4a4a4a;letter-spacing:0.000px;white-space:nowrap;">6</div><div id="t35" style="position:absolute;left:722.50px;top:212.18px;font-size:12.5px;line-height:12.5px;font-weight:400;color:#4a4a4a;letter-spacing:-0.016px;white-space:nowrap;">Angyal Barbara</div><div id="t36" style="position:absolute;left:954.50px;top:212.18px;font-size:12.5px;line-height:12.5px;font-weight:400;color:#4a4a4a;letter-spacing:-0.120px;white-space:nowrap;">2023.03.11. 23:59:59</div><div id="t37" style="position:absolute;left:1242.00px;top:212.18px;font-size:12.5px;line-height:12.5px;font-weight:400;color:#4a4a4a;letter-spacing:-0.002px;white-space:nowrap;">Nincs</div><div id="t38" style="position:absolute;left:1426.00px;top:212.18px;font-size:12.5px;line-height:12.5px;font-weight:400;color:#4a4a4a;letter-spacing:0.000px;white-space:nowrap;">Vezetők</div><div id="t39" style="position:absolute;left:564.20px;top:242.18px;font-size:12.5px;line-height:12.5px;font-weight:400;color:#4a4a4a;letter-spacing:0.000px;white-space:nowrap;">8</div><div id="t40" style="position:absolute;left:722.50px;top:242.18px;font-size:12.5px;line-height:12.5px;font-weight:400;color:#4a4a4a;letter-spacing:0.000px;white-space:nowrap;">Anna Kiss</div><div id="t41" style="position:absolute;left:954.50px;top:242.18px;font-size:12.5px;line-height:12.5px;font-weight:400;color:#4a4a4a;letter-spacing:-0.120px;white-space:nowrap;">2023.03.11. 23:59:59</div><div id="t42" style="position:absolute;left:1242.00px;top:242.18px;font-size:12.5px;line-height:12.5px;font-weight:400;color:#4a4a4a;letter-spacing:-0.002px;white-space:nowrap;">Nincs</div><div id="t43" style="position:absolute;left:1426.00px;top:242.18px;font-size:12.5px;line-height:12.5px;font-weight:400;color:#4a4a4a;letter-spacing:0.000px;white-space:nowrap;">Vezetők</div><div id="t44" style="position:absolute;left:564.20px;top:272.18px;font-size:12.5px;line-height:12.5px;font-weight:400;color:#4a4a4a;letter-spacing:0.000px;white-space:nowrap;">1</div><div id="t45" style="position:absolute;left:722.50px;top:272.18px;font-size:12.5px;line-height:12.5px;font-weight:400;color:#4a4a4a;letter-spacing:0.000px;white-space:nowrap;">Arany alíz</div><div id="t46" style="position:absolute;left:954.50px;top:272.18px;font-size:12.5px;line-height:12.5px;font-weight:400;color:#4a4a4a;letter-spacing:-0.120px;white-space:nowrap;">2023.03.11. 23:59:59</div><div id="t47" style="position:absolute;left:1242.00px;top:272.18px;font-size:12.5px;line-height:12.5px;font-weight:400;color:#4a4a4a;letter-spacing:-0.002px;white-space:nowrap;">Nincs</div><div id="t48" style="position:absolute;left:1426.00px;top:272.18px;font-size:12.5px;line-height:12.5px;font-weight:400;color:#4a4a4a;letter-spacing:0.000px;white-space:nowrap;">Vezetők</div><div id="t49" style="position:absolute;left:564.20px;top:302.18px;font-size:12.5px;line-height:12.5px;font-weight:400;color:#4a4a4a;letter-spacing:0.000px;white-space:nowrap;">16</div><div id="t50" style="position:absolute;left:721.50px;top:302.18px;font-size:12.5px;line-height:12.5px;font-weight:400;color:#4a4a4a;letter-spacing:0.000px;white-space:nowrap;">Bán Bernadett</div><div id="t51" style="position:absolute;left:954.50px;top:302.18px;font-size:12.5px;line-height:12.5px;font-weight:400;color:#4a4a4a;letter-spacing:-0.120px;white-space:nowrap;">2023.03.11. 23:59:59</div><div id="t52" style="position:absolute;left:1242.00px;top:302.18px;font-size:12.5px;line-height:12.5px;font-weight:400;color:#4a4a4a;letter-spacing:-0.002px;white-space:nowrap;">Nincs</div><div id="t53" style="position:absolute;left:1426.00px;top:302.18px;font-size:12.5px;line-height:12.5px;font-weight:400;color:#4a4a4a;letter-spacing:0.000px;white-space:nowrap;">Vezetők</div><div id="t54" style="position:absolute;left:564.20px;top:332.18px;font-size:12.5px;line-height:12.5px;font-weight:400;color:#4a4a4a;letter-spacing:0.000px;white-space:nowrap;">2</div><div id="t55" style="position:absolute;left:721.50px;top:332.18px;font-size:12.5px;line-height:12.5px;font-weight:400;color:#4a4a4a;letter-spacing:0.000px;white-space:nowrap;">Barna Béla</div><div id="t56" style="position:absolute;left:954.50px;top:332.18px;font-size:12.5px;line-height:12.5px;font-weight:400;color:#4a4a4a;letter-spacing:-0.120px;white-space:nowrap;">2023.03.11. 23:59:59</div><div id="t57" style="position:absolute;left:1242.00px;top:332.18px;font-size:12.5px;line-height:12.5px;font-weight:400;color:#4a4a4a;letter-spacing:-0.002px;white-space:nowrap;">Nincs</div><div id="t58" style="position:absolute;left:1426.00px;top:332.18px;font-size:12.5px;line-height:12.5px;font-weight:400;color:#4a4a4a;letter-spacing:0.000px;white-space:nowrap;">Vezetők</div><div id="t59" style="position:absolute;left:564.20px;top:362.18px;font-size:12.5px;line-height:12.5px;font-weight:400;color:#4a4a4a;letter-spacing:0.000px;white-space:nowrap;">7</div><div id="t60" style="position:absolute;left:721.50px;top:362.18px;font-size:12.5px;line-height:12.5px;font-weight:400;color:#4a4a4a;letter-spacing:0.000px;white-space:nowrap;">Bátor Eszter</div><div id="t61" style="position:absolute;left:954.50px;top:362.18px;font-size:12.5px;line-height:12.5px;font-weight:400;color:#4a4a4a;letter-spacing:-0.120px;white-space:nowrap;">2023.03.11. 23:59:59</div><div id="t62" style="position:absolute;left:1242.00px;top:362.18px;font-size:12.5px;line-height:12.5px;font-weight:400;color:#4a4a4a;letter-spacing:-0.002px;white-space:nowrap;">Nincs</div><div id="t63" style="position:absolute;left:1426.00px;top:362.18px;font-size:12.5px;line-height:12.5px;font-weight:400;color:#4a4a4a;letter-spacing:0.000px;white-space:nowrap;">Vezetők</div><div id="t64" style="position:absolute;left:564.20px;top:392.18px;font-size:12.5px;line-height:12.5px;font-weight:400;color:#4a4a4a;letter-spacing:0.000px;white-space:nowrap;">3</div><div id="t65" style="position:absolute;left:722.50px;top:392.18px;font-size:12.5px;line-height:12.5px;font-weight:400;color:#4a4a4a;letter-spacing:0.000px;white-space:nowrap;">Citrom Cili</div><div id="t66" style="position:absolute;left:954.50px;top:392.18px;font-size:12.5px;line-height:12.5px;font-weight:400;color:#4a4a4a;letter-spacing:-0.120px;white-space:nowrap;">2023.03.11. 23:59:59</div><div id="t67" style="position:absolute;left:1242.00px;top:392.18px;font-size:12.5px;line-height:12.5px;font-weight:400;color:#4a4a4a;letter-spacing:-0.002px;white-space:nowrap;">Nincs</div><div id="t68" style="position:absolute;left:1425.00px;top:392.18px;font-size:12.5px;line-height:12.5px;font-weight:400;color:#4a4a4a;letter-spacing:0.000px;white-space:nowrap;">Beosztottak</div><div id="t69" style="position:absolute;left:564.20px;top:422.18px;font-size:12.5px;line-height:12.5px;font-weight:400;color:#4a4a4a;letter-spacing:0.000px;white-space:nowrap;">5</div><div id="t70" style="position:absolute;left:721.50px;top:422.18px;font-size:12.5px;line-height:12.5px;font-weight:400;color:#4a4a4a;letter-spacing:0.000px;white-space:nowrap;">Fehér Ferenc</div><div id="t71" style="position:absolute;left:954.50px;top:422.18px;font-size:12.5px;line-height:12.5px;font-weight:400;color:#4a4a4a;letter-spacing:-0.120px;white-space:nowrap;">2023.03.11. 23:59:59</div><div id="t72" style="position:absolute;left:1242.00px;top:422.18px;font-size:12.5px;line-height:12.5px;font-weight:400;color:#4a4a4a;letter-spacing:-0.002px;white-space:nowrap;">Nincs</div><div id="t73" style="position:absolute;left:1425.00px;top:422.18px;font-size:12.5px;line-height:12.5px;font-weight:400;color:#4a4a4a;letter-spacing:0.000px;white-space:nowrap;">Beosztottak</div><div id="t74" style="position:absolute;left:564.20px;top:452.18px;font-size:12.5px;line-height:12.5px;font-weight:400;color:#4a4a4a;letter-spacing:0.000px;white-space:nowrap;">12</div><div id="t75" style="position:absolute;left:721.50px;top:452.18px;font-size:12.5px;line-height:12.5px;font-weight:400;color:#4a4a4a;letter-spacing:0.000px;white-space:nowrap;">Fekete Ferenc</div><div id="t76" style="position:absolute;left:954.50px;top:452.18px;font-size:12.5px;line-height:12.5px;font-weight:400;color:#4a4a4a;letter-spacing:-0.120px;white-space:nowrap;">2023.03.11. 23:59:59</div><div id="t77" style="position:absolute;left:1242.00px;top:452.18px;font-size:12.5px;line-height:12.5px;font-weight:400;color:#4a4a4a;letter-spacing:-0.002px;white-space:nowrap;">Nincs</div><div id="t78" style="position:absolute;left:1425.00px;top:452.18px;font-size:12.5px;line-height:12.5px;font-weight:400;color:#4a4a4a;letter-spacing:0.000px;white-space:nowrap;">Beosztottak</div><div id="t79" style="position:absolute;left:564.20px;top:482.18px;font-size:12.5px;line-height:12.5px;font-weight:400;color:#4a4a4a;letter-spacing:0.000px;white-space:nowrap;">9</div><div id="t80" style="position:absolute;left:721.50px;top:482.18px;font-size:12.5px;line-height:12.5px;font-weight:400;color:#4a4a4a;letter-spacing:0.000px;white-space:nowrap;">Horváth Ildikó</div><div id="t81" style="position:absolute;left:954.50px;top:482.18px;font-size:12.5px;line-height:12.5px;font-weight:400;color:#4a4a4a;letter-spacing:-0.120px;white-space:nowrap;">2023.03.11. 23:59:59</div><div id="t82" style="position:absolute;left:1242.00px;top:482.18px;font-size:12.5px;line-height:12.5px;font-weight:400;color:#4a4a4a;letter-spacing:-0.002px;white-space:nowrap;">Nincs</div><div id="t83" style="position:absolute;left:1425.00px;top:482.18px;font-size:12.5px;line-height:12.5px;font-weight:400;color:#4a4a4a;letter-spacing:0.000px;white-space:nowrap;">Beosztottak</div><div id="t84" style="position:absolute;left:564.20px;top:512.17px;font-size:12.5px;line-height:12.5px;font-weight:400;color:#4a4a4a;letter-spacing:0.000px;white-space:nowrap;">13</div><div id="t85" style="position:absolute;left:721.50px;top:512.17px;font-size:12.5px;line-height:12.5px;font-weight:400;color:#4a4a4a;letter-spacing:0.000px;white-space:nowrap;">Huta Béla</div><div id="t86" style="position:absolute;left:954.50px;top:512.17px;font-size:12.5px;line-height:12.5px;font-weight:400;color:#4a4a4a;letter-spacing:-0.120px;white-space:nowrap;">2023.03.11. 23:59:59</div><div id="t87" style="position:absolute;left:1242.00px;top:512.17px;font-size:12.5px;line-height:12.5px;font-weight:400;color:#4a4a4a;letter-spacing:-0.002px;white-space:nowrap;">Nincs</div><div id="t88" style="position:absolute;left:1425.00px;top:512.17px;font-size:12.5px;line-height:12.5px;font-weight:400;color:#4a4a4a;letter-spacing:0.000px;white-space:nowrap;">Beosztottak</div><div id="t89" style="position:absolute;left:564.20px;top:542.17px;font-size:12.5px;line-height:12.5px;font-weight:400;color:#4a4a4a;letter-spacing:0.000px;white-space:nowrap;">11</div><div id="t90" style="position:absolute;left:721.50px;top:542.17px;font-size:12.5px;line-height:12.5px;font-weight:400;color:#4a4a4a;letter-spacing:0.000px;white-space:nowrap;">Kék Attila</div><div id="t91" style="position:absolute;left:954.50px;top:542.17px;font-size:12.5px;line-height:12.5px;font-weight:400;color:#4a4a4a;letter-spacing:-0.120px;white-space:nowrap;">2023.03.11. 23:59:59</div><div id="t92" style="position:absolute;left:1242.00px;top:542.17px;font-size:12.5px;line-height:12.5px;font-weight:400;color:#4a4a4a;letter-spacing:-0.002px;white-space:nowrap;">Nincs</div><div id="t93" style="position:absolute;left:1425.00px;top:542.17px;font-size:12.5px;line-height:12.5px;font-weight:400;color:#4a4a4a;letter-spacing:0.000px;white-space:nowrap;">Külsősök</div><div id="t94" style="position:absolute;left:564.20px;top:572.17px;font-size:12.5px;line-height:12.5px;font-weight:400;color:#4a4a4a;letter-spacing:0.000px;white-space:nowrap;">15</div><div id="t95" style="position:absolute;left:721.50px;top:572.17px;font-size:12.5px;line-height:12.5px;font-weight:400;color:#4a4a4a;letter-spacing:0.000px;white-space:nowrap;">Nagy Armand</div><div id="t96" style="position:absolute;left:954.50px;top:572.17px;font-size:12.5px;line-height:12.5px;font-weight:400;color:#4a4a4a;letter-spacing:-0.120px;white-space:nowrap;">2023.03.11. 23:59:59</div><div id="t97" style="position:absolute;left:1242.00px;top:572.17px;font-size:12.5px;line-height:12.5px;font-weight:400;color:#4a4a4a;letter-spacing:-0.002px;white-space:nowrap;">Nincs</div><div id="t98" style="position:absolute;left:1425.00px;top:572.17px;font-size:12.5px;line-height:12.5px;font-weight:400;color:#4a4a4a;letter-spacing:0.000px;white-space:nowrap;">Külsősök</div><div id="t99" style="position:absolute;left:564.20px;top:602.17px;font-size:12.5px;line-height:12.5px;font-weight:400;color:#4a4a4a;letter-spacing:0.000px;white-space:nowrap;">14</div><div id="t100" style="position:absolute;left:722.50px;top:602.17px;font-size:12.5px;line-height:12.5px;font-weight:400;color:#4a4a4a;letter-spacing:0.000px;white-space:nowrap;">Szedres Eszter</div><div id="t101" style="position:absolute;left:954.50px;top:602.17px;font-size:12.5px;line-height:12.5px;font-weight:400;color:#4a4a4a;letter-spacing:-0.120px;white-space:nowrap;">2023.03.11. 23:59:59</div><div id="t102" style="position:absolute;left:1242.00px;top:602.17px;font-size:12.5px;line-height:12.5px;font-weight:400;color:#4a4a4a;letter-spacing:-0.002px;white-space:nowrap;">Nincs</div><div id="t103" style="position:absolute;left:1425.00px;top:602.17px;font-size:12.5px;line-height:12.5px;font-weight:400;color:#4a4a4a;letter-spacing:0.000px;white-space:nowrap;">Külsősök</div><div id="t104" style="position:absolute;left:564.20px;top:632.17px;font-size:12.5px;line-height:12.5px;font-weight:400;color:#4a4a4a;letter-spacing:0.000px;white-space:nowrap;">4</div><div id="t105" style="position:absolute;left:722.50px;top:632.17px;font-size:12.5px;line-height:12.5px;font-weight:400;color:#4a4a4a;letter-spacing:0.000px;white-space:nowrap;">Tar Tamás</div><div id="t106" style="position:absolute;left:954.50px;top:632.17px;font-size:12.5px;line-height:12.5px;font-weight:400;color:#4a4a4a;letter-spacing:-0.120px;white-space:nowrap;">2023.03.11. 23:59:59</div><div id="t107" style="position:absolute;left:1242.00px;top:632.17px;font-size:12.5px;line-height:12.5px;font-weight:400;color:#4a4a4a;letter-spacing:-0.002px;white-space:nowrap;">Nincs</div><div id="t108" style="position:absolute;left:1425.00px;top:632.17px;font-size:12.5px;line-height:12.5px;font-weight:400;color:#4a4a4a;letter-spacing:0.000px;white-space:nowrap;">Nincs</div><div id="t109" style="position:absolute;left:564.20px;top:662.17px;font-size:12.5px;line-height:12.5px;font-weight:400;color:#4a4a4a;letter-spacing:0.000px;white-space:nowrap;">10</div><div id="t110" style="position:absolute;left:722.50px;top:662.17px;font-size:12.5px;line-height:12.5px;font-weight:400;color:#4a4a4a;letter-spacing:0.000px;white-space:nowrap;">Zöld Zoltán</div><div id="t111" style="position:absolute;left:954.50px;top:662.17px;font-size:12.5px;line-height:12.5px;font-weight:400;color:#4a4a4a;letter-spacing:-0.120px;white-space:nowrap;">2023.03.11. 23:59:59</div><div id="t112" style="position:absolute;left:1242.00px;top:662.17px;font-size:12.5px;line-height:12.5px;font-weight:400;color:#4a4a4a;letter-spacing:-0.002px;white-space:nowrap;">Nincs</div><div id="t113" style="position:absolute;left:1425.00px;top:662.17px;font-size:12.5px;line-height:12.5px;font-weight:400;color:#4a4a4a;letter-spacing:0.000px;white-space:nowrap;">Nincs</div><div id="t114" style="position:absolute;left:329.00px;top:1004.67px;font-size:12.5px;line-height:12.5px;font-weight:400;color:#a9b3c0;letter-spacing:0.548px;white-space:nowrap;">új</div><div id="t115" style="position:absolute;left:374.00px;top:1004.67px;font-size:12.5px;line-height:12.5px;font-weight:700;color:#ffffff;letter-spacing:0.000px;white-space:nowrap;transform:scaleX(0.9397);transform-origin:0 0;">szerkesztés</div><div id="t116" style="position:absolute;left:474.50px;top:1004.67px;font-size:12.5px;line-height:12.5px;font-weight:700;color:#ffffff;letter-spacing:0.000px;white-space:nowrap;transform:scaleX(0.9681);transform-origin:0 0;">törlés</div><div id="t117" style="position:absolute;left:593.00px;top:1004.88px;font-size:12.5px;line-height:12.5px;font-weight:700;color:#ffffff;letter-spacing:0.000px;white-space:nowrap;transform:scaleX(0.9281);transform-origin:0 0;">csoport megváltoztatása</div><div id="t118" style="position:absolute;left:766.00px;top:1004.88px;font-size:12.5px;line-height:12.5px;font-weight:700;color:#ffffff;letter-spacing:0.000px;white-space:nowrap;transform:scaleX(0.9271);transform-origin:0 0;">eltávolítás a csoportból</div><div id="t119" style="position:absolute;left:71.50px;top:901.77px;font-size:16.5px;line-height:16.5px;font-weight:400;color:#f2f4f6;letter-spacing:0.608px;white-space:nowrap;">Administrator</div><div id="t120" style="position:absolute;left:71.50px;top:923.75px;font-size:13px;line-height:13px;font-weight:400;color:#8d99a8;letter-spacing:0.413px;white-space:nowrap;">Adminisztrátorok</div><div id="t121" style="position:absolute;left:71.00px;top:995.68px;font-size:16.5px;line-height:16.5px;font-weight:400;color:#f2f4f6;letter-spacing:-0.579px;white-space:nowrap;">16:49:01</div><div id="t122" style="position:absolute;left:72.00px;top:1018.25px;font-size:13px;line-height:13px;font-weight:400;color:#8d99a8;letter-spacing:-0.330px;white-space:nowrap;">2020.03.11. szerda</div>
</body></html>
